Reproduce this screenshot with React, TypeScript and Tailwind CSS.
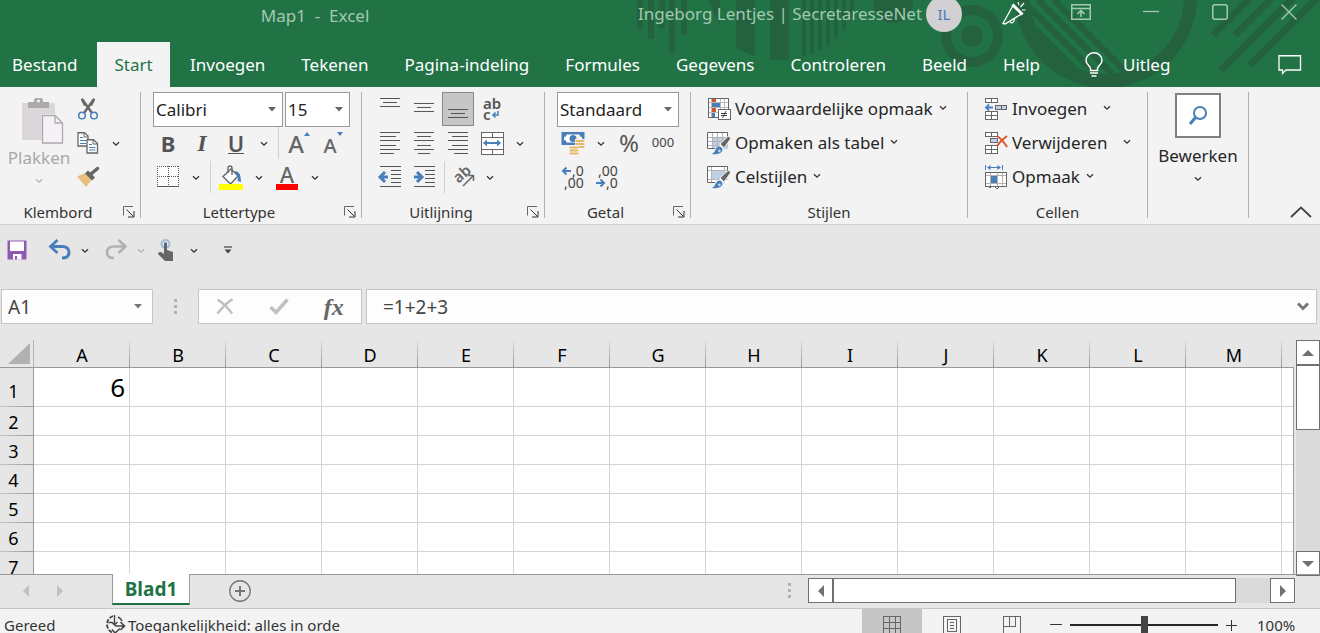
import React from "react";

type Kids = { children?: React.ReactNode };

function Icon({ w, h, children, crisp }: Kids & { w: number; h: number; crisp?: boolean }) {
  return (
    <svg
      width={w}
      height={h}
      viewBox={`0 0 ${w} ${h}`}
      fill="none"
      aria-hidden="true"
      className="shrink-0 overflow-visible"
      shapeRendering={crisp ? "crispEdges" : "auto"}
    >
      {children}
    </svg>
  );
}

const Chevron = ({ color = "#333" }: { color?: string }) => (
  <Icon w={8} h={6}>
    <path d="M1 1.2 4 4.2 7 1.2" stroke={color} strokeWidth="1.3" />
  </Icon>
);

function Tool({ label, children, active }: Kids & { label: string; active?: boolean }) {
  return (
    <button
      type="button"
      aria-label={label}
      className={
        active
          ? "mx-px flex h-[34px] w-8 shrink-0 items-center justify-center border border-[#8a8a8a] bg-[#c6c6c6]"
          : "flex h-[34px] w-[34px] shrink-0 items-center justify-center"
      }
    >
      {children}
    </button>
  );
}

function Drop({ label, tight, color }: { label: string; tight?: boolean; color?: string }) {
  return (
    <button
      type="button"
      aria-label={label}
      className={
        tight
          ? "flex h-[34px] w-4 shrink-0 items-center justify-center pt-0.5"
          : "flex h-[34px] w-[22px] shrink-0 items-center justify-center pt-0.5"
      }
    >
      <Chevron color={color} />
    </button>
  );
}

const ToolRow = ({ children }: Kids) => <div className="flex h-[34px] items-center">{children}</div>;
const MiniRule = () => <div className="mx-[3px] h-8 w-px shrink-0 bg-[#d0d0d0]" />;
const Rule = () => <div className="h-[126px] w-px shrink-0 bg-[#b1b1b1]" />;

function GroupLabel({ name, launcher }: { name: string; launcher?: boolean }) {
  return (
    <div className="mt-1.5 flex h-6 items-center">
      <span className="flex-1 text-center text-[15px] leading-6 text-[#333]">{name}</span>
      {launcher && (
        <button type="button" aria-label={`${name} instellingen`} className="flex w-6 justify-end pr-[5px]">
          <Icon w={12} h={12}>
            <path d="M.5 9.500V.5H10" stroke="#666" />
            <path d="M3.500 3.500 10.500 10.500M11 5V11H5" stroke="#333" />
          </Icon>
        </button>
      )}
    </div>
  );
}

function Combo({ label, value, options, width }: { label: string; value: string; options: string[]; width: string }) {
  return (
    <div className={`grid h-[35px] items-center border border-[#999] bg-white ${width}`}>
      <select
        aria-label={label}
        defaultValue={value}
        className="col-start-1 row-start-1 h-full w-full appearance-none bg-transparent pl-0.5 text-[17px] text-[#222] outline-none"
      >
        {options.map((o) => (
          <option key={o}>{o}</option>
        ))}
      </select>
      <span className="pointer-events-none col-start-1 row-start-1 justify-self-end pr-1.5">
        <Icon w={8} h={5}>
          <path d="M0 0H8L4 4.500Z" fill="#666" />
        </Icon>
      </span>
    </div>
  );
}

/* Stacks of horizontal strokes used by the alignment buttons: [x1, x2, y] */
function Lines({ rows, children }: Kids & { rows: number[][] }) {
  return (
    <Icon w={22} h={22} crisp>
      {rows.map(([a, b, y]) => (
        <path key={`${y}`} d={`M${a} ${y}.5H${b}`} stroke="#555" />
      ))}
      {children}
    </Icon>
  );
}

function Backdrop() {
  const bars = [802, 810, 818, 826, 834, 842, 850];
  return (
    <svg
      width="720"
      height="87"
      viewBox="600 0 720 87"
      aria-hidden="true"
      className="absolute right-0 top-0"
      fill="#24623f"
    >
      <defs>
        <clipPath id="disc">
          <circle cx="780" cy="-24" r="84" />
        </clipPath>
        <clipPath id="ringHole">
          <circle cx="1107" cy="-3" r="77" />
        </clipPath>
      </defs>
      <path d="M637 0h6v28h-6zM648 0h6v39h-6zM659 0h6v28h-6zM669 0h6v52h-6zM681 0h6v35h-6zM708 0h12v26z" />
      <g clipPath="url(#disc)">
        <path d="M736 0h19v70h-19zM770 0h19v70h-19z" />
        {bars.map((x) => (
          <path key={x} d={`M${x} 0h4v70h-4z`} />
        ))}
      </g>
      <circle cx="893" cy="3" r="20" />
      <circle cx="972" cy="36" r="26" fill="none" stroke="#24623f" strokeWidth="10" />
      <circle cx="972" cy="36" r="11" />
      <path
        fillRule="evenodd"
        d="M1015 -3a91 91 0 0 0 182 0a91 91 0 0 0 -182 0M1030 -3a77 77 0 0 0 154 0a77 77 0 0 0 -154 0"
      />
      <g clipPath="url(#ringHole)" stroke="#24623f" strokeWidth="6" fill="none">
        <path d="M1020 14l80 80M1022 0l90 90M1038 0l90 90M1054 0l90 90" />
      </g>
      <g stroke="#24623f" strokeWidth="7" fill="none">
        <path d="M1213 35l40-40M1235 35l40-40M1221 70l75-75M1250 65l70-70" />
      </g>
    </svg>
  );
}

function TitleBar() {
  return (
    <div className="relative flex h-[42px] items-start text-[17px] leading-7 text-[#a3c9b1]">
      <div className="flex-1 pt-0.5 text-center">
        <span className="whitespace-pre">Map1{"  "}-{"  "}Excel</span>
      </div>
      <div className="flex w-[690px] shrink-0 items-start">
        <span className="w-[296px] whitespace-nowrap pl-2">Ingeborg Lentjes | SecretaresseNet</span>
        <button
          type="button"
          aria-label="Account"
          className="-mt-1 flex h-9 w-9 items-center justify-center rounded-full bg-[#d2d0d2] text-[15px] text-[#4a7ebb]"
        >
          IL
        </button>
        <button type="button" aria-label="Binnenkort beschikbaar" className="ml-10 mt-0.5">
          <Icon w={24} h={24}>
            <path d="M1 21.500 11 3.500 19.500 12 3 22Z" stroke="#fff" strokeWidth="1.300" />
            <path d="M10.500 2.500 20.500 12.500" stroke="#fff" strokeWidth="3" />
            <path d="M8 19.500C9 22 12 21 12.500 17" stroke="#fff" strokeWidth="1.200" />
            <path d="M16 0 17 3M22 1 18.500 5M20 8H23.500" stroke="#fff" strokeWidth="1.200" />
          </Icon>
        </button>
        <button type="button" aria-label="Weergaveopties voor lint" className="ml-[45px] mt-1">
          <Icon w={20} h={16}>
            <path d="M.75.75H19.250V15.250H.75ZM1 4.500H19" stroke="#a3c9b1" strokeWidth="1.500" />
            <path d="M10 13V7M6.500 10 10 6.500 13.500 10" stroke="#a3c9b1" strokeWidth="1.600" />
          </Icon>
        </button>
        <button type="button" aria-label="Minimaliseren" className="ml-[52px] mt-1">
          <Icon w={16} h={16}>
            <path d="M0 7.500H16" stroke="#a3c9b1" strokeWidth="1.300" />
          </Icon>
        </button>
        <button type="button" aria-label="Maximaliseren" className="ml-[53px] mt-1">
          <Icon w={16} h={16}>
            <rect x=".75" y=".75" width="14.500" height="14.500" rx="2" stroke="#a3c9b1" strokeWidth="1.500" />
          </Icon>
        </button>
        <button type="button" aria-label="Sluiten" className="ml-[53px] mt-1">
          <Icon w={16} h={16}>
            <path d="M.5.5 15.500 15.500M15.500.5.5 15.500" stroke="#a3c9b1" strokeWidth="1.400" />
          </Icon>
        </button>
      </div>
    </div>
  );
}

function RibbonTabs() {
  const tabs = [
    "Invoegen",
    "Tekenen",
    "Pagina-indeling",
    "Formules",
    "Gegevens",
    "Controleren",
    "Beeld",
    "Help",
  ];
  return (
    <nav className="relative flex h-[45px] items-stretch text-[17px] text-white">
      <button type="button" className="w-[97px] pl-3 text-left">
        Bestand
      </button>
      <button type="button" className="mr-0.5 w-[73px] bg-[#f3f3f3] text-[#217346]">
        Start
      </button>
      {tabs.map((t) => (
        <button key={t} type="button" className="px-[18px]">
          {t}
        </button>
      ))}
      <button type="button" className="ml-[27px] flex items-center gap-5">
        <Icon w={18} h={25}>
          <path
            d="M5.500 18.500V16.500C5.500 14 1 12.500 1 8.500A8 7.700 0 0 1 17 8.500C17 12.500 12.500 14 12.500 16.500V18.500Z"
            stroke="#fff"
            strokeWidth="1.500"
          />
          <path d="M5 21H13M6.500 24H11.500" stroke="#fff" strokeWidth="1.500" />
        </Icon>
        Uitleg
      </button>
      <button type="button" aria-label="Opmerkingen" className="ml-auto pr-[18px]">
        <Icon w={24} h={20}>
          <path d="M1 .75H22.500V15H8L4.500 18.500V15H1Z" stroke="#fff" strokeWidth="1.300" />
        </Icon>
      </button>
    </nav>
  );
}

function Clipboard() {
  return (
    <section className="flex w-[140px] shrink-0 flex-col">
      <div className="flex h-[102px]">
        <button
          type="button"
          className="flex w-[75px] flex-col items-center pl-[3px] pt-1.5 text-[17px] leading-6 text-[#a8a8a8]"
        >
          <span className="pl-2">
            <Icon w={42} h={46}>
              <rect y="5" width="33" height="37" fill="#dad6da" />
              <path d="M6 4H12V2Q12 0 14 0H19Q21 0 21 2V4H27V10H6Z" fill="#aaa" />
              <circle cx="16.500" cy="3" r="1.500" fill="#f3f3f3" />
              <path d="M19.500 16H42V46H19.500Z" fill="#f3f3f3" />
              <path d="M20.500 17.500H33L40.500 25V45H20.500Z" fill="#f6f1f8" stroke="#aaa" strokeWidth="1.300" />
              <path d="M33 17.500V25H40.500" stroke="#aaa" strokeWidth="1.300" />
            </Icon>
          </span>
          <span className="mt-0.5">Plakken</span>
          <span className="mt-2">
            <Chevron color="#b5b5b5" />
          </span>
        </button>
        <div className="-ml-1 flex flex-col">
          <ToolRow>
            <Tool label="Knippen">
              <Icon w={20} h={22}>
                <path d="M4 0 8.500 7 6 8 3 2ZM16 0 11.500 7 14 8 17 2Z" fill="#666" />
                <path d="M4 1 14 15M16 1 6 15" stroke="#666" strokeWidth="2.400" />
                <circle cx="4" cy="17.500" r="3.300" stroke="#4a7ebb" strokeWidth="1.500" />
                <circle cx="16" cy="17.500" r="3.300" stroke="#4a7ebb" strokeWidth="1.500" />
              </Icon>
            </Tool>
          </ToolRow>
          <ToolRow>
            <Tool label="Kopiëren">
              <Icon w={22} h={22}>
                <path d="M1 .75H7.500L11 4V14H1Z" fill="#fff" stroke="#666" strokeWidth="1.300" />
                <path d="M7 1V5H11" stroke="#666" />
                <path d="M3 5.500H6M3 8.500H9M3 11.500H9" stroke="#4a7ebb" strokeWidth="1.200" />
                <path d="M10 7.750H16.500L20.500 11.500V21H10Z" fill="#fff" stroke="#666" strokeWidth="1.300" />
                <path d="M16 8V12H20" stroke="#666" />
                <path d="M12 12.500H15M12 15.500H18.500M12 18H18.500" stroke="#4a7ebb" strokeWidth="1.200" />
              </Icon>
            </Tool>
            <Drop label="Kopieeropties" />
          </ToolRow>
          <ToolRow>
            <Tool label="Opmaak kopiëren">
              <Icon w={22} h={20}>
                <path d="M0 9.500 8 6 14.500 13 9 20Z" fill="#e8bf7d" />
                <path d="M8 6.500 11 3.500 18 10.500 15 13.500Z" fill="#666" />
                <path d="M14 7 20.500 1.500" stroke="#666" strokeWidth="3.500" strokeLinecap="round" />
              </Icon>
            </Tool>
          </ToolRow>
        </div>
      </div>
      <GroupLabel name="Klembord" launcher />
    </section>
  );
}

function FontGroup() {
  return (
    <section className="flex w-[220px] shrink-0 flex-col">
      <div className="pl-2.5">
        <div className="flex h-[34px] gap-0.5 pl-0.5">
          <Combo label="Lettertype" value="Calibri" options={["Calibri", "Arial", "Verdana"]} width="w-[130px]" />
          <Combo label="Tekengrootte" value="15" options={["11", "12", "15", "18"]} width="w-[65px]" />
        </div>
        <ToolRow>
          <Tool label="Vet">
            <span className="text-[22px] font-bold text-[#555]">B</span>
          </Tool>
          <Tool label="Cursief">
            <span className="font-['Liberation_Serif',serif] text-2xl font-bold italic text-[#555]">I</span>
          </Tool>
          <Tool label="Onderstrepen">
            <span className="border-b border-[#555] text-[22px] font-semibold leading-5 text-[#555]">U</span>
          </Tool>
          <Drop label="Onderstrepingsopties" />
          <MiniRule />
          <Tool label="Tekengrootte vergroten">
            <span className="pt-0.5 text-2xl font-medium leading-6 text-[#666]">A</span>
            <span className="self-start pt-1.5">
              <Icon w={6} h={4}>
                <path d="M0 4 3 0 6 4Z" fill="#4a7ebb" />
              </Icon>
            </span>
          </Tool>
          <Tool label="Tekengrootte verkleinen">
            <span className="pt-1.5 text-xl font-medium leading-6 text-[#666]">A</span>
            <span className="self-start pt-1.5">
              <Icon w={6} h={4}>
                <path d="M0 0H6L3 4Z" fill="#4a7ebb" />
              </Icon>
            </span>
          </Tool>
        </ToolRow>
        <ToolRow>
          <Tool label="Randen">
            <Icon w={22} h={22} crisp>
              <path d="M0 0H22V22H0Z" fill="#fbfbfb" />
              <path d="M0 .5H22M.5 0V21M21.500 0V21M11.500 0V21M0 10.500H22" stroke="#555" strokeDasharray="1 1" />
              <path d="M0 20.500H22" stroke="#555" />
            </Icon>
          </Tool>
          <Drop label="Randopties" />
          <MiniRule />
          <Tool label="Opvulkleur">
            <Icon w={24} h={25}>
              <path d="M4 11.500 12 4 19 11 11.500 19Z" fill="#fff" stroke="#666" strokeWidth="1.400" />
              <path d="M9 8V3Q9 1 11 1T13 3V10" stroke="#666" strokeWidth="1.400" />
              <path d="M16 6Q22 6 22 17L18.500 16Q20 10 16 8Z" fill="#4a7ebb" />
              <path d="M0 19H24V25H0Z" fill="#ff0" />
            </Icon>
          </Tool>
          <Drop label="Opvulkleuren" />
          <Tool label="Tekstkleur">
            <span className="border-b-[6px] border-[#f00] px-1 text-[22px] font-medium leading-5 text-[#666]">A</span>
          </Tool>
          <Drop label="Tekstkleuren" />
        </ToolRow>
      </div>
      <GroupLabel name="Lettertype" launcher />
    </section>
  );
}

function AlignGroup() {
  const five = (rows: number[][]) => rows.map(([a, b], i) => [a, b, i * 4 + (i > 2 ? 1 : 0)]);
  return (
    <section className="flex w-[182px] shrink-0 flex-col">
      <div className="pl-[11px]">
        <ToolRow>
          <Tool label="Boven uitlijnen">
            <Lines rows={[[1, 21, -1], [4, 18, 3], [1, 21, 7]].map(([a, b, y]) => [a, b, y + 1])} />
          </Tool>
          <Tool label="Centreren (verticaal)">
            <Lines rows={[[1, 21, 5], [4, 18, 9], [1, 21, 13]]} />
          </Tool>
          <Tool label="Onder uitlijnen" active>
            <Lines rows={[[1, 21, 11], [4, 18, 15], [1, 21, 19]]} />
          </Tool>
          <Tool label="Tekstterugloop">
            <span className="flex flex-col items-start text-[15px] font-semibold leading-[11px] text-[#555]">
              <span>ab</span>
              <span className="flex items-center gap-0.5">
                c
                <Icon w={7} h={8}>
                  <path d="M6 0V4H1M3.500 1.500 1 4 3.500 6.500" stroke="#4a7ebb" strokeWidth="1.500" />
                </Icon>
              </span>
            </span>
          </Tool>
        </ToolRow>
        <ToolRow>
          <Tool label="Links uitlijnen">
            <Lines rows={five([[1, 21], [1, 17], [1, 21], [1, 17], [1, 21], [1, 15]])} />
          </Tool>
          <Tool label="Centreren">
            <Lines rows={five([[1, 21], [4, 18], [1, 21], [4, 18], [1, 21], [5, 17]])} />
          </Tool>
          <Tool label="Rechts uitlijnen">
            <Lines rows={five([[1, 21], [5, 21], [1, 21], [5, 21], [1, 21], [7, 21]])} />
          </Tool>
          <Tool label="Samenvoegen en centreren">
            <Icon w={24} h={24} crisp>
              <path d="M1 1H23V23H1Z" fill="#fff" stroke="#666" strokeWidth="1" />
              <path d="M1 6H23M1 18H23M12 1V6M12 18V23" stroke="#666" />
              <path d="M4 12H20" stroke="#4a7ebb" strokeWidth="1.500" />
              <path d="M7 8.500V15.500L3 12ZM17 8.500V15.500L21 12Z" fill="#4a7ebb" shapeRendering="auto" />
            </Icon>
          </Tool>
          <Drop label="Samenvoegopties" />
        </ToolRow>
        <ToolRow>
          <Tool label="Inspringing verkleinen">
            <Lines rows={[[1, 22, 0], [12, 22, 4], [12, 22, 8], [12, 22, 12], [12, 22, 16], [1, 22, 20]]}>
              <path d="M9 11H3M6 6 1 11 6 16" stroke="#4a7ebb" strokeWidth="3" shapeRendering="auto" />
            </Lines>
          </Tool>
          <Tool label="Inspringing vergroten">
            <Lines rows={[[1, 22, 0], [12, 22, 4], [12, 22, 8], [12, 22, 12], [12, 22, 16], [1, 22, 20]]}>
              <path d="M1 11H8M4 6 9 11 4 16" stroke="#4a7ebb" strokeWidth="3" shapeRendering="auto" />
            </Lines>
          </Tool>
          <MiniRule />
          <Tool label="Afdrukstand">
            <Icon w={22} h={22}>
              <text x="2" y="15" fontSize="15" fontWeight="600" fill="#666" transform="rotate(-42 7 13)">ab</text>
              <path d="M9 20 19 10M14 9.500H19.500V15" stroke="#666" strokeWidth="1.500" />
            </Icon>
          </Tool>
          <Drop label="Afdrukstandopties" tight />
        </ToolRow>
      </div>
      <GroupLabel name="Uitlijning" launcher />
    </section>
  );
}

function DecimalIcon({ up }: { up?: boolean }) {
  return (
    <span className="flex flex-col items-end text-[14px] leading-3 text-[#444]">
      {up ? (
        <>
          <span>,00</span>
          <span className="flex items-center gap-px">
            <Icon w={9} h={8}>
              <path d="M0 4H8M4.500.5 8 4 4.500 7.500" stroke="#4a7ebb" strokeWidth="2" />
            </Icon>
            ,0
          </span>
        </>
      ) : (
        <>
          <span className="flex items-center gap-px">
            <Icon w={9} h={8}>
              <path d="M9 4H1M4.500.5 1 4 4.500 7.500" stroke="#4a7ebb" strokeWidth="2" />
            </Icon>
            ,0
          </span>
          <span>,00</span>
        </>
      )}
    </span>
  );
}

function NumberGroup() {
  return (
    <section className="flex w-[145px] shrink-0 flex-col">
      <div className="pl-[11px]">
        <div className="flex h-[34px] pl-px">
          <Combo
            label="Getalnotatie"
            value="Standaard"
            options={["Standaard", "Getal", "Valuta", "Percentage"]}
            width="w-[122px]"
          />
        </div>
        <ToolRow>
          <Tool label="Financiële notatie">
            <Icon w={24} h={24}>
              <path d="M.5 1H23.500V14H.5Z" fill="#4a7ebb" />
              <path d="M3 6Q5.500 6 5.500 3.500H18.500Q18.500 6 21 6V9Q18.500 9 18.500 11.500H5.500Q5.500 9 3 9Z" fill="#fff" />
              <circle cx="12" cy="7.500" r="3.500" fill="#4a7ebb" />
              <path d="M14 8H24V21H14Z" fill="#f3f3f3" />
              <path d="M15.500 10H22.500M15.500 13H22.500M15.500 16H22.500" stroke="#e8b868" strokeWidth="2.200" strokeLinecap="round" />
              <path d="M7.500 14.500H18V24H7.500Z" fill="#f3f3f3" />
              <path d="M9.500 16.500H16.500M9.500 19.500H16.500M9.500 22.500H16.500" stroke="#e8b868" strokeWidth="2.200" strokeLinecap="round" />
            </Icon>
          </Tool>
          <Drop label="Valutaopties" />
          <Tool label="Procentnotatie">
            <span className="text-2xl text-[#555]">%</span>
          </Tool>
          <Tool label="Duizendtalnotatie">
            <span className="text-[13px] text-[#444]">000</span>
          </Tool>
        </ToolRow>
        <ToolRow>
          <Tool label="Meer decimalen">
            <DecimalIcon />
          </Tool>
          <Tool label="Minder decimalen">
            <DecimalIcon up />
          </Tool>
        </ToolRow>
      </div>
      <GroupLabel name="Getal" launcher />
    </section>
  );
}

function MenuItem({ icon, text, wide }: { icon: React.ReactNode; text: string; wide?: boolean }) {
  return (
    <button type="button" className="flex h-[34px] items-center whitespace-nowrap text-[17px] text-[#262626]">
      {icon}
      <span className="pl-1">{text}</span>
      <span className={wide ? "pb-0.5 pl-4" : "pb-0.5 pl-1.5"}>
        <Chevron />
      </span>
    </button>
  );
}

const Sheetlet = ({ fill }: { fill: string }) => (
  <>
    <path d="M1 1H21V17H1Z" fill="#fff" />
    <path d={fill} fill="#bdd0e6" />
  </>
);

const Brush = () => (
  <>
    <path d="M13 12 21 4.500Q24 4 23.500 7L17 16Z" fill="#666" stroke="#f3f3f3" />
    <path d="M13.500 12 17 15.500 15 17.500 12 14Z" fill="#eee" />
    <path d="M5 22Q8 20 9 17Q11 13.500 14 15Q17 18 14 20.500Q11 23 5 22Z" fill="#4a7ebb" />
    <path d="M11 18Q13 16.500 14 19Q13 20.500 11.500 20Z" fill="#cfdcec" />
  </>
);

function StylesGroup() {
  return (
    <section className="flex w-[276px] shrink-0 flex-col">
      <div className="pl-4">
        <MenuItem
          text="Voorwaardelijke opmaak"
          icon={
            <Icon w={24} h={24} crisp>
              <path d="M1 1H21V20H1Z" fill="#fff" />
              <path d="M5 1H9V5H5ZM5 11H9V15H5Z" fill="#d35230" />
              <path d="M5 6H13V10H5ZM5 16H8V20H5Z" fill="#4a7ebb" />
              <path d="M1 5.500H21M1 10.500H21M1 15.500H12M4.500 1V20M13.500 1V12M17.500 1V12" stroke="#bbb" />
              <path d="M21 12V1H1V20H11" stroke="#666" />
              <path d="M11 12.500H23V22.500H11Z" fill="#fff" stroke="#666" />
              <path d="M14 16.500H20M14 18.500H20M19 14 15.500 21" stroke="#444" shapeRendering="auto" />
            </Icon>
          }
        />
        <MenuItem
          text="Opmaken als tabel"
          icon={
            <Icon w={24} h={23}>
              <Sheetlet fill="M6 6H21V17H6Z" />
              <path d="M1 5.500H21M1 9.500H21M1 13.500H21M5.500 1V17M10.500 1V17M15.500 1V17" stroke="#b3b3b3" />
              <path d="M8 16.500H.5V.5H20.500V6" stroke="#666" />
              <Brush />
            </Icon>
          }
        />
        <MenuItem
          text="Celstijlen"
          icon={
            <Icon w={24} h={23}>
              <Sheetlet fill="M5 5H18V14H5Z" />
              <path d="M1 4.500H21M1 13.500H21M4.500 1V17M17.500 1V17" stroke="#b3b3b3" />
              <path d="M8 16.500H.5V.5H20.500V6" stroke="#666" />
              <Brush />
            </Icon>
          }
        />
      </div>
      <GroupLabel name="Stijlen" />
    </section>
  );
}

function CellsGroup() {
  return (
    <section className="flex w-[179px] shrink-0 flex-col">
      <div className="pl-[17px]">
        <MenuItem
          wide
          text="Invoegen"
          icon={
            <Icon w={23} h={22} crisp>
              <path d="M.5.5H12.500V4.500H.5ZM6.500.5V4.500M.5 13.500H12.500V21.500H.5ZM6.500 13.500V21.500M.5 17.500H12.500" fill="#fff" stroke="#666" />
              <path d="M10.500 7.500H21.500V11.500H10.500ZM16.500 7.500V11.500" fill="#bdd0e6" stroke="#666" />
              <path d="M8 9.500H1M4 6.500 1 9.500 4 12.500" stroke="#4a7ebb" strokeWidth="1.800" shapeRendering="auto" />
            </Icon>
          }
        />
        <MenuItem
          wide
          text="Verwijderen"
          icon={
            <Icon w={23} h={22} crisp>
              <path d="M.5.5H12.500V4.500H.5ZM6.500.5V4.500M.5 13.500H12.500V21.500H.5ZM6.500 13.500V21.500M.5 17.500H12.500" fill="#fff" stroke="#666" />
              <path d="M5.500 6.500H12.500V10.500H5.500Z" fill="#bdd0e6" stroke="#666" />
              <path d="M12 4Q17 7 22 15M22 4Q16 8 12 14" stroke="#d9532c" strokeWidth="2" shapeRendering="auto" />
            </Icon>
          }
        />
        <MenuItem
          text="Opmaak"
          icon={
            <Icon w={23} h={24} crisp>
              <path d="M.5 0V5M17.500 0V5M3 2.500H15" stroke="#4a7ebb" />
              <path d="M5.500 0V5L2 2.500ZM12.500 0V5L16 2.500Z" fill="#4a7ebb" shapeRendering="auto" />
              <path d="M.5 7.500H21.500V21.500H.5Z" fill="#fff" stroke="#666" />
              <path d="M1 10.500H21M1 18.500H21M5.500 8V21M12.500 8V21M17.500 8V21" stroke="#b3b3b3" />
              <path d="M6 11H12V18H6Z" fill="#4a7ebb" />
              <path d="M4 23 7 21.500H9L12 23.500 15 21.500" stroke="#666" />
            </Icon>
          }
        />
      </div>
      <GroupLabel name="Cellen" />
    </section>
  );
}

function Ribbon() {
  return (
    <div className="flex items-start border-b border-[#d0d0d0] bg-[#f3f3f3] pt-[5px]">
      <Clipboard />
      <Rule />
      <FontGroup />
      <Rule />
      <AlignGroup />
      <Rule />
      <NumberGroup />
      <Rule />
      <StylesGroup />
      <Rule />
      <CellsGroup />
      <Rule />
      <button
        type="button"
        className="flex w-[100px] shrink-0 flex-col items-center pt-px text-[17px] leading-6 text-[#262626]"
      >
        <span className="flex h-[45px] w-[46px] items-center justify-center border-2 border-[#808080] bg-white">
          <Icon w={18} h={20}>
            <circle cx="11" cy="7" r="6" stroke="#4a7ebb" strokeWidth="2" />
            <path d="M6.500 11.500 1 18" stroke="#4a7ebb" strokeWidth="3" />
          </Icon>
        </span>
        <span className="mt-1.5">Bewerken</span>
        <span className="mt-2">
          <Chevron />
        </span>
      </button>
      <Rule />
      <button type="button" aria-label="Lint samenvouwen" className="ml-auto self-end pb-1.5 pr-2">
        <Icon w={22} h={12}>
          <path d="M1 11 11 1.500 21 11" stroke="#444" strokeWidth="1.800" />
        </Icon>
      </button>
    </div>
  );
}

function QuickAccess() {
  return (
    <div className="flex h-[50px] items-center pl-[5px]">
      <button type="button" aria-label="Opslaan" className="mr-3.5 flex w-6 justify-center">
        <Icon w={20} h={20}>
          <path d="M.5.5H19.500V19.500H.5Z" fill="#8e5bb0" />
          <path d="M3 1.500H17V11H3ZM5 14H14.500V19.500H5Z" fill="#fff" />
          <path d="M5 14H6V19.500H5ZM8 16H10V19.500H8Z" fill="#8e5bb0" />
        </Icon>
      </button>
      <Tool label="Ongedaan maken">
        <Icon w={22} h={20}>
          <path d="M2 6.500H14Q20 7 20 12.500T13 18" stroke="#4a7ebb" strokeWidth="3" />
          <path d="M8.500 0 1.500 6.500 8.500 13" stroke="#4a7ebb" strokeWidth="2.800" />
        </Icon>
      </Tool>
      <Drop label="Lijst ongedaan maken" tight />
      <span className="ml-1.5 flex">
        <Tool label="Opnieuw">
          <Icon w={22} h={20}>
            <path d="M20 6.500H8Q2 7 2 12.500T9 18" stroke="#b1b1b1" strokeWidth="2.600" />
            <path d="M13.500 0 20.500 6.500 13.500 13" stroke="#b1b1b1" strokeWidth="2.400" />
          </Icon>
        </Tool>
      </span>
      <Drop label="Lijst opnieuw" tight color="#b1b1b1" />
      <Tool label="Aanraak-/muismodus">
        <Icon w={18} h={22}>
          <circle cx="8.500" cy="5" r="4" stroke="#9dbbdc" strokeWidth="2" />
          <path d="M7 4Q8.500 2.500 10 4V11L16 13V22H8L1 15Q1 12.500 4 13L7 15Z" fill="#666" />
        </Icon>
      </Tool>
      <Drop label="Modusopties" />
      <span className="ml-1.5 flex">
        <Tool label="Werkbalk aanpassen">
          <Icon w={8} h={8}>
            <path d="M0 1H8" stroke="#444" strokeWidth="1.200" />
            <path d="M.5 3.500H7.500L4 7.500Z" fill="#444" />
          </Icon>
        </Tool>
      </span>
    </div>
  );
}

const Grip = () => (
  <Icon w={3} h={16} crisp>
    <path d="M0 0H3V3H0ZM0 6H3V9H0ZM0 12H3V15H0Z" fill="#b1b1b1" />
  </Icon>
);

function FormulaBar() {
  return (
    <div className="flex items-center px-px pb-4 pt-3.5 text-[19px] text-[#444]">
      <div className="flex h-[35px] w-[152px] shrink-0 items-center border border-[#c6c6c6] bg-[#fdfdfd]">
        <input
          aria-label="Naamvak"
          defaultValue="A1"
          className="h-full min-w-0 flex-1 bg-transparent pl-1.5 outline-none"
        />
        <button type="button" aria-label="Namen" className="flex w-7 justify-center">
          <Icon w={8} h={5}>
            <path d="M0 0H8L4 4.500Z" fill="#777" />
          </Icon>
        </button>
      </div>
      <div className="flex w-[45px] shrink-0 justify-center">
        <Grip />
      </div>
      <div className="flex h-[35px] w-[164px] shrink-0 items-center justify-around border border-[#c6c6c6] bg-[#fdfdfd]">
        <button type="button" aria-label="Annuleren">
          <Icon w={18} h={17}>
            <path d="M1.500 1.500Q10 7 16 15.500M16.500 1Q7 8 1.500 15.500" stroke="#c0c0c0" strokeWidth="2.600" />
          </Icon>
        </button>
        <button type="button" aria-label="Invoeren">
          <Icon w={20} h={17}>
            <path d="M1.500 9 7 14.500 18.500 1.500" stroke="#c0c0c0" strokeWidth="3.400" />
          </Icon>
        </button>
        <button
          type="button"
          aria-label="Functie invoegen"
          className="font-['Liberation_Serif',serif] text-2xl font-bold italic leading-7 text-[#666]"
        >
          fx
        </button>
      </div>
      <div className="ml-1 mr-0.5 flex h-[35px] flex-1 items-center border border-[#c6c6c6] bg-[#fdfdfd]">
        <input
          aria-label="Formulebalk"
          defaultValue="=1+2+3"
          className="h-full min-w-0 flex-1 bg-transparent pl-4 outline-none"
        />
        <button type="button" aria-label="Formulebalk uitvouwen" className="flex pr-[7px]">
          <Icon w={12} h={9}>
            <path d="M1 1.500 6 6.500 11 1.500" stroke="#777" strokeWidth="3" />
          </Icon>
        </button>
      </div>
    </div>
  );
}

function Arrow({ dir, color = "#707070" }: { dir: "up" | "down" | "left" | "right"; color?: string }) {
  const d = {
    up: "M0 9 6 3 12 9Z",
    down: "M0 3H12L6 9Z",
    left: "M9 0V12L3 6Z",
    right: "M3 0V12L9 6Z",
  }[dir];
  return (
    <Icon w={12} h={12}>
      <path d={d} fill={color} />
    </Icon>
  );
}

function Grid() {
  const cols = "ABCDEFGHIJKLM".split("");
  const rows = [1, 2, 3, 4, 5, 6, 7];
  return (
    <div className="flex min-h-0 flex-1">
      <div className="min-w-0 flex-1 overflow-hidden">
        <table className="w-full table-fixed border-separate border-spacing-0 text-lg leading-6 text-black">
          <thead>
            <tr className="h-7">
              <th
                aria-label="Alles selecteren"
                className="w-[34px] border-b border-r border-b-[#999] border-r-[#b5b5b5] p-0 align-bottom"
              >
                <span className="flex justify-end pb-[3px] pr-[3px]">
                  <Icon w={22} h={21}>
                    <path d="M22 0V21H0Z" fill="#b1b1b1" />
                  </Icon>
                </span>
              </th>
              {cols.map((c) => (
                <th
                  key={c}
                  scope="col"
                  className="w-24 border-b border-[#999] bg-linear-to-b from-[#dcdcdc] to-[#999] bg-[length:1px_100%] bg-right bg-no-repeat p-0 pt-[3px] font-normal"
                >
                  {c}
                </th>
              ))}
              <th className="border-b border-[#999] p-0" />
            </tr>
          </thead>
          <tbody>
            {rows.map((r) => (
              <tr key={r} className={r === 1 ? "h-[39px]" : "h-[29px]"}>
                <th
                  scope="row"
                  className={
                    r === 1
                      ? "border-r border-[#999] bg-linear-to-r from-[#c8c8c8] to-[#999] bg-[length:100%_1px] bg-bottom bg-no-repeat p-0 pb-1 pr-1.5 align-bottom font-normal"
                      : "border-r border-[#999] bg-linear-to-r from-[#c8c8c8] to-[#999] bg-[length:100%_1px] bg-bottom bg-no-repeat p-0 pb-0.5 pr-1.5 align-bottom font-normal"
                  }
                >
                  {r}
                </th>
                {cols.map((c) => (
                  <td key={c} className="border-b border-r border-[#d4d4d4] bg-white p-0 pr-1 text-right text-[26px]">
                    {r === 1 && c === "A" ? "6" : null}
                  </td>
                ))}
                <td className="border-b border-[#d4d4d4] bg-white p-0" />
              </tr>
            ))}
          </tbody>
        </table>
      </div>
      <div className="mt-[27px] w-px shrink-0 bg-[#999]" />
      <div className="-mb-0.5 ml-0.5 flex w-6 shrink-0 flex-col bg-[#dadada]">
        <button
          type="button"
          aria-label="Omhoog schuiven"
          className="flex h-[25px] items-center justify-center border border-[#707070] bg-white"
        >
          <Arrow dir="up" />
        </button>
        <div className="h-[65px] border border-[#707070] bg-white" />
        <div className="flex-1" />
        <button
          type="button"
          aria-label="Omlaag schuiven"
          className="flex h-[25px] items-center justify-center border border-[#707070] bg-white"
        >
          <Arrow dir="down" />
        </button>
      </div>
    </div>
  );
}

function SheetBar() {
  return (
    <div className="flex h-[35px] shrink-0 items-stretch border-b border-[#c6c6c6]">
      <div className="flex w-28 shrink-0 items-center gap-[22px] border-t border-[#999] pb-0.5 pl-5">
        <button type="button" aria-label="Vorig blad">
          <Arrow dir="left" color="#c0c0c0" />
        </button>
        <button type="button" aria-label="Volgend blad">
          <Arrow dir="right" color="#c0c0c0" />
        </button>
      </div>
      <button
        type="button"
        className="mb-[3px] w-[78px] shrink-0 border-x border-b-2 border-x-[#999] border-b-[#217346] bg-white text-[19px] font-bold leading-6 text-[#217346]"
      >
        Blad1
      </button>
      <div className="flex flex-1 items-center border-t border-[#999] pb-0.5 pl-[39px] pr-[25px]">
        <button type="button" aria-label="Nieuw blad">
          <Icon w={22} h={22}>
            <circle cx="11" cy="11" r="10.250" stroke="#777" strokeWidth="1.300" />
            <path d="M11 6V16M6 11H16" stroke="#777" strokeWidth="2" />
          </Icon>
        </button>
        <div className="flex flex-1 justify-end pr-[17px]">
          <Grip />
        </div>
        <div className="flex h-[25px] w-[487px] shrink-0 bg-[#dadada]">
          <button
            type="button"
            aria-label="Naar links schuiven"
            className="flex w-[25px] items-center justify-center border border-[#707070] bg-white"
          >
            <Arrow dir="left" />
          </button>
          <div className="w-[403px] border border-[#707070] bg-white" />
          <button
            type="button"
            aria-label="Naar rechts schuiven"
            className="ml-auto flex w-[25px] items-center justify-center border border-[#707070] bg-white"
          >
            <Arrow dir="right" />
          </button>
        </div>
      </div>
    </div>
  );
}

function StatusBar() {
  return (
    <footer className="h-6 shrink-0 overflow-hidden bg-[#f3f3f3] text-[15px] text-[#333]">
      <div className="flex h-8 items-center">
        <span className="w-[105px] pl-1">Gereed</span>
        <button type="button" className="flex items-center gap-0.5 whitespace-nowrap">
          <Icon w={21} h={22}>
            <path d="M8 2A9 9 0 0 0 7 18.500" stroke="#444" strokeWidth="1.800" strokeDasharray="4 1.500" />
            <path d="M9.500 1V11M6.500 8 9.500 11 12.500 8M3.500 8.500H6.500" stroke="#444" strokeWidth="1.400" />
            <path d="M10 12H19M15.500 8 19.500 12 15.500 16M13 3Q16 4.500 17 7" stroke="#444" strokeWidth="1.600" />
            <path d="M7 15.500 10 19 15 14.500" stroke="#444" strokeWidth="1.600" />
          </Icon>
          Toegankelijkheid: alles in orde
        </button>
        <button
          type="button"
          aria-label="Normaal"
          className="ml-auto flex h-full w-[60px] items-center justify-center bg-[#c6c6c6]"
        >
          <Icon w={18} h={18} crisp>
            <path d="M.5.5H17.500V17.500H.5ZM6.500.5V17.500M12.500.5V17.500M.5 6.500H17.500M.5 12.500H17.500" stroke="#666" />
          </Icon>
        </button>
        <button type="button" aria-label="Pagina-indeling weergeven" className="flex w-[60px] justify-center">
          <Icon w={18} h={18} crisp>
            <path d="M.5.5H17.500V17.500H.5ZM4.500 3.500H13.500V15.500H4.500ZM7 6.500H11M7 9.500H11M7 12.500H11" stroke="#666" />
          </Icon>
        </button>
        <button type="button" aria-label="Pagina-eindevoorbeeld" className="flex w-[60px] justify-center">
          <Icon w={18} h={18} crisp>
            <path d="M.5.5H17.500V17.500H.5ZM.5 10.500H12.500V.5M6.500.5V10.500" stroke="#666" />
          </Icon>
        </button>
        <button type="button" aria-label="Uitzoomen" className="flex w-7 justify-center">
          <Icon w={12} h={12} crisp>
            <path d="M0 5.500H12" stroke="#333" />
          </Icon>
        </button>
        <input
          type="range"
          aria-label="In-/uitzoomen"
          defaultValue={50}
          className="h-[18px] w-[148px] appearance-none bg-linear-to-b from-[#262626] to-[#262626] bg-[length:100%_2px] bg-center bg-no-repeat [&::-webkit-slider-thumb]:h-[18px] [&::-webkit-slider-thumb]:w-[7px] [&::-webkit-slider-thumb]:appearance-none [&::-webkit-slider-thumb]:bg-[#444]"
        />
        <button type="button" aria-label="Inzoomen" className="flex w-[27px] justify-center">
          <Icon w={11} h={11} crisp>
            <path d="M0 5.500H11M5.500 0V11" stroke="#333" />
          </Icon>
        </button>
        <span className="w-[75px] pl-3">100%</span>
      </div>
    </footer>
  );
}

export default function App() {
  return (
    <div className="flex h-screen flex-col overflow-hidden bg-[#e6e6e6] font-['Noto_Sans','Open_Sans',sans-serif]">
      <header className="relative shrink-0 bg-[#217346]">
        <Backdrop />
        <TitleBar />
        <RibbonTabs />
      </header>
      <Ribbon />
      <QuickAccess />
      <FormulaBar />
      <Grid />
      <SheetBar />
      <StatusBar />
    </div>
  );
}
